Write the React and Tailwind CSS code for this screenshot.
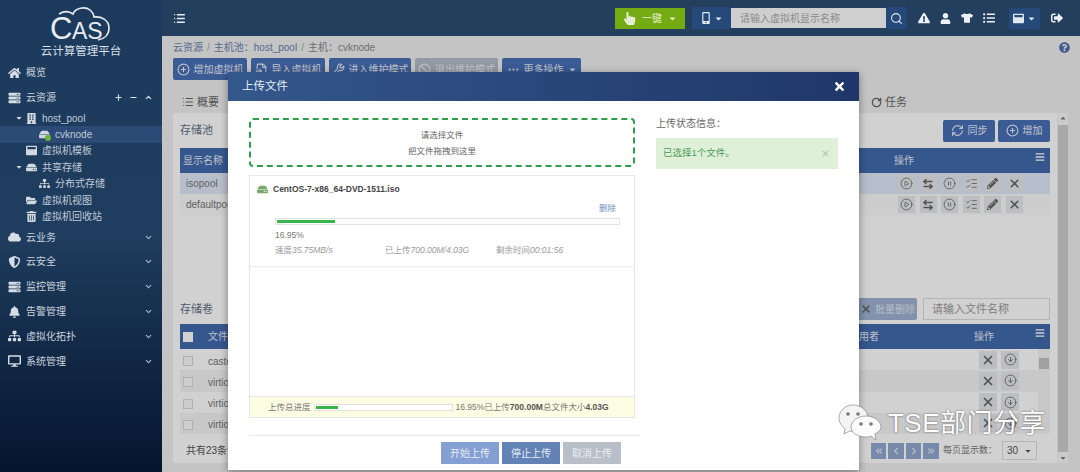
import {
  CirclePlus, RefreshCw, CirclePlay, CirclePause, CircleArrowDown, Search, ChevronDown, ChevronUp,
  ChevronLeft, ChevronRight, ChevronsLeft, ChevronsRight, Plus, Minus, List, X, Ellipsis, RotateCw, Ban, Wrench,
  FileInput, ArrowLeftRight, ListChecks,
} from 'lucide-react'
import {
  FaHome, FaCloud, FaShieldAlt, FaBell, FaSitemap, FaDesktop, FaServer, FaTrashAlt, FaFolderOpen,
  FaTshirt, FaUser, FaExclamationTriangle, FaListUl, FaSignOutAlt, FaTimes, FaHandPointer, FaPencilAlt,
  FaBars, FaCaretDown, FaCaretUp, FaQuestionCircle, FaHdd, FaBuilding, FaWindowMaximize, FaMobileAlt,
} from 'react-icons/fa'

const font = { fontFamily: '"Liberation Sans", "Noto Sans CJK SC", sans-serif' }

// ─── Sidebar ──────────────────────────────────────────
function TopItem({ icon: Icon, label, h = 'h-[24.8px]', extra }) {
  return (
    <div className={`flex items-center pl-[8px] pr-[9px] text-[10px] text-[#c9d3de] ${h}`}>
      <Icon size={12} className="w-[13px] shrink-0 text-[#d5dde6]" />
      <span className="ml-[5px] flex-1">{label}</span>
      {extra ?? <ChevronDown size={9} strokeWidth={3} className="text-[#aab8c6]" />}
    </div>
  )
}

function TreeItem({ icon: Icon, label, indent, caret, active, status }) {
  return (
    <div
      className={`flex h-[16.4px] items-center text-[10px] text-[#c0cbd7] ${active ? 'bg-[#2b4a75]' : ''} ${indent}`}
    >
      <span className="w-[10px] shrink-0">{caret && <FaCaretDown size={8} className="text-[#d0d8e0]" />}</span>
      <span className="relative ml-[1px] w-[12px] shrink-0">
        <Icon size={11} className="text-[#d0d8e0]" />
        {status && <span className="absolute bottom-[-1px] right-0 h-[6px] w-[6px] rounded-full bg-[#6fb52c]" />}
      </span>
      <span className="ml-[4px]">{label}</span>
    </div>
  )
}

function Sidebar() {
  return (
    <aside className="flex w-[162px] shrink-0 flex-col bg-gradient-to-b from-[#1c3a5c] via-[#1f3d5e] to-[#06152f]">
      <div className="flex h-[60px] flex-col items-center pt-[6px]">
        <svg width="64" height="40" viewBox="0 0 64 40" fill="none" className="mb-[-2px]">
          <path
            d="M10 8C15 5 20 5 24 8C26 2 36 0 41 4C44 7 45 9 45 11C52 10 60 14 60 22C60 29 55 33 49 34"
            stroke="#e6ecf2"
            strokeWidth="1.6"
          />
          <text x="1" y="33" fontSize="31" fill="#e6ecf2" style={font}>C</text>
          <text x="23" y="33" fontSize="23" fontWeight="500" fill="#e6ecf2" style={font}>AS</text>
        </svg>
        <div className="text-[11.5px] leading-[15px] text-[#d6dee6]">云计算管理平台</div>
      </div>
      <TopItem icon={FaHome} label="概览" h="h-[25px]" extra={<span />} />
      <TopItem
        icon={FaServer}
        label="云资源"
        h="h-[25px]"
        extra={
          <span className="flex items-center gap-[6px] text-[#d5dde6]">
            <Plus size={9} strokeWidth={3} />
            <Minus size={9} strokeWidth={3} />
            <ChevronUp size={9} strokeWidth={3} />
          </span>
        }
      />
      <div className="flex flex-col">
        <TreeItem icon={FaBuilding} label="host_pool" indent="pl-[15px]" caret />
        <TreeItem icon={FaHdd} label="cvknode" indent="pl-[28px]" active status />
        <TreeItem icon={FaWindowMaximize} label="虚拟机模板" indent="pl-[15px]" />
        <TreeItem icon={FaHdd} label="共享存储" indent="pl-[15px]" caret />
        <TreeItem icon={FaSitemap} label="分布式存储" indent="pl-[28px]" />
        <TreeItem icon={FaFolderOpen} label="虚拟机视图" indent="pl-[15px]" />
        <TreeItem icon={FaTrashAlt} label="虚拟机回收站" indent="pl-[15px]" />
      </div>
      <div className="flex flex-col">
        <TopItem icon={FaCloud} label="云业务" />
        <TopItem icon={FaShieldAlt} label="云安全" />
        <TopItem icon={FaServer} label="监控管理" />
        <TopItem icon={FaBell} label="告警管理" />
        <TopItem icon={FaSitemap} label="虚拟化拓扑" />
        <TopItem icon={FaDesktop} label="系统管理" />
      </div>
    </aside>
  )
}

// ─── Top bar ──────────────────────────────────────────
function TopBar() {
  return (
    <header className="flex h-[36px] shrink-0 items-center bg-[#233f5d] pl-[11px]">
      <List size={13} strokeWidth={2.5} className="text-[#e6ecf2]" />
      <div className="ml-[429px] flex h-[21px] w-[70px] items-center justify-center gap-[6px] bg-[#74ab12] text-[10px] text-[#e3efcc]">
        <FaHandPointer size={13} className="text-[#e8f0d8]" />
        <span>一键</span>
        <FaCaretDown size={9} />
      </div>
      <div className="ml-[7px] flex h-[22px] w-[39px] items-center justify-center gap-[2px] bg-[#254a7a] text-[#e6ecf2]">
        <FaMobileAlt size={12} />
        <FaCaretDown size={9} />
      </div>
      <div className="flex h-[20px] w-[155px] items-center bg-[#cfcfcf] pl-[9px] text-[10px] text-[#8a8a8a]">
        请输入虚拟机显示名称
      </div>
      <div className="flex h-[22px] w-[21px] items-center justify-center bg-[#254a7a]">
        <Search size={13} strokeWidth={2} className="text-[#e6ecf2]" />
      </div>
      <div className="ml-[11px] flex items-center gap-[10px] text-[#eef2f6]">
        <FaExclamationTriangle size={12} />
        <FaUser size={11} />
        <FaTshirt size={12} />
        <FaListUl size={12} />
      </div>
      <div className="ml-[14px] flex h-[21px] w-[31px] items-center justify-center gap-[3px] rounded-[2px] bg-[#254a7a] text-[#dfe6ee]">
        <FaWindowMaximize size={11} />
        <FaCaretDown size={9} />
      </div>
      <FaSignOutAlt size={12} className="ml-[11px] text-[#eef2f6]" />
    </header>
  )
}

// ─── Page under the dialog ──────────────────────────────────────────
function ToolButton({ icon: Icon, label, muted, caret, w }) {
  return (
    <div
      className={`flex h-[22px] items-center justify-center gap-[4px] rounded-[2px] text-[10px] text-[#e8edf6] ${w} ${muted ? 'bg-[#b3bbc9] text-[#e0e3e8]' : 'bg-[#486fb6]'}`}
    >
      <Icon size={13} />
      <span>{label}</span>
      {caret && <FaCaretDown size={9} />}
    </div>
  )
}

function HeadRow({ children }) {
  return (
    <div className="relative flex h-[25px] items-center bg-[#426bae] text-[10px] text-[#e6ebf5]">
      {children}
      <FaBars size={10} className="absolute right-[5px] top-[4px] text-white" />
    </div>
  )
}

function OpButton({ icon: Icon, size = 13, bold, box = 'h-[17px] w-[17px]' }) {
  return (
    <span className={`flex items-center justify-center bg-[#e6e8ec] text-[#666] ${box}`}>
      <Icon size={size} strokeWidth={bold ? 3 : 1.5} />
    </span>
  )
}

function PoolRow({ name, selected }) {
  return (
    <div className={`flex h-[21px] items-center pl-[6px] text-[10px] text-[#777] ${selected ? 'bg-[#e0e8f8]' : 'bg-[#fafafa]'}`}>
      <span className="flex-1">{name}</span>
      <div className="flex gap-[4.6px] pr-[27px]">
        <OpButton icon={CirclePlay} />
        <OpButton icon={ArrowLeftRight} size={12} bold />
        <OpButton icon={CirclePause} />
        <OpButton icon={ListChecks} />
        <OpButton icon={FaPencilAlt} size={11} />
        <OpButton icon={X} size={13} bold />
      </div>
    </div>
  )
}

function FileRow({ name, striped }) {
  return (
    <div className={`flex h-[21.25px] items-center pl-[3px] pt-[3px] text-[10px] text-[#777] ${striped ? 'bg-[#f4f4f4]' : ''}`}>
      <span className="h-[10px] w-[10px] border border-[#d8d8d8] bg-[#fafafa]" />
      <span className="ml-[15px] flex-1">{name}</span>
      <div className="mt-[-3px] flex gap-[4px] pr-[31px]">
        <OpButton icon={X} size={14} bold box="h-[18px] w-[18px]" />
        <OpButton icon={CircleArrowDown} size={13} box="h-[18px] w-[18px]" />
      </div>
    </div>
  )
}

function PagerButton({ icon: Icon }) {
  return (
    <span className="flex h-[16px] w-[15.5px] items-center justify-center bg-[#92a9d0] text-[#dfe6f2]">
      <Icon size={10} strokeWidth={3} />
    </span>
  )
}

function PageContent() {
  return (
    <div className="flex h-full flex-col text-[#555]">
      <div className="flex h-[22px] items-center justify-between pl-[11px] pr-[10px] pt-[1px] text-[10px]">
        <div className="flex items-center text-[#6a82ad]">
          <span>云资源</span>
          <span className="mx-[4px] text-[#aaa]">/</span>
          <span>主机池：host_pool</span>
          <span className="mx-[4px] text-[#aaa]">/</span>
          <span className="text-[#888]">主机：cvknode</span>
        </div>
        <FaQuestionCircle size={11} className="text-[#4d6fb0]" />
      </div>
      <div className="flex gap-[4px] pl-[11px]">
        <ToolButton icon={CirclePlus} label="增加虚拟机" w="w-[74px]" />
        <ToolButton icon={FileInput} label="导入虚拟机" w="w-[74px]" />
        <ToolButton icon={Wrench} label="进入维护模式" w="w-[82px]" />
        <ToolButton icon={Ban} label="退出维护模式" muted w="w-[83px]" />
        <ToolButton icon={Ellipsis} label="更多操作" caret w="w-[79px]" />
      </div>
      <div className="mt-[11px] flex h-[22px] items-center justify-between pl-[20px] text-[11px] text-[#666]">
        <span className="flex items-center gap-[3px]"><List size={12} />概要</span>
        <span className="mr-[173px] flex items-center gap-[3px]"><RotateCw size={11} strokeWidth={3} />任务</span>
      </div>
      <div className="flex min-h-0 flex-1 pl-[11px]">
        <div className="flex h-[350px] w-[884px] flex-col bg-white px-[7px]">
          <div className="flex h-[35px] items-center justify-between">
            <span className="text-[11px] text-[#5f6f88]">存储池</span>
            <div className="flex gap-[3px]">
              <ToolButton icon={RefreshCw} label="同步" w="w-[52px]" />
              <ToolButton icon={CirclePlus} label="增加" w="w-[52px]" />
            </div>
          </div>
          <HeadRow>
            <span className="flex-1 pl-[3px]">显示名称</span>
            <span className="pr-[136px]">操作</span>
          </HeadRow>
          <PoolRow name="isopool" selected />
          <PoolRow name="defaultpool" />
          <div className="mt-[79px] flex h-[30px] items-center justify-between">
            <span className="text-[11px] text-[#5f6f88]">存储卷</span>
            <div className="flex items-center gap-[6px]">
              <div className="flex h-[22px] w-[59px] items-center justify-center gap-[3px] rounded-[2px] bg-[#9fb2d2] text-[10px] text-[#dfe6f2]">
                <X size={12} strokeWidth={3} className="text-[#666]" />
                批量删除
              </div>
              <div className="flex h-[22px] w-[127px] items-center border border-[#ddd] bg-white pl-[8px] text-[11px] text-[#999]">
                请输入文件名称
              </div>
            </div>
          </div>
          <HeadRow>
            <span className="ml-[3px] h-[10px] w-[10px] bg-white" />
            <span className="ml-[15px] flex-1">文件名</span>
            <span className="mr-[95px]">用者</span>
            <span className="pr-[56px]">操作</span>
          </HeadRow>
          <div className="relative">
            <FileRow name="castools.iso" />
            <FileRow name="virtio-win.iso" striped />
            <FileRow name="virtio-win.vfd" />
            <FileRow name="virtio-win2.iso" striped />
            <div className="absolute right-0 top-0 flex h-full w-[12px] flex-col items-center bg-[#f4f4f4] pt-[9px]">
              <span className="h-[11px] w-[10px] bg-[#c4c4c4]" />
            </div>
          </div>
          <div className="mt-[7px] flex h-[19px] items-center justify-between pl-[6px] pr-[13px] text-[10px]">
            <span>共有23条记录</span>
            <div className="flex items-center gap-[2px]">
              <PagerButton icon={ChevronsLeft} />
              <PagerButton icon={ChevronLeft} />
              <PagerButton icon={ChevronRight} />
              <PagerButton icon={ChevronsRight} />
              <span className="ml-[2px] mr-[3px] text-[9px] text-[#777]">每页显示数：</span>
              <span className="flex h-[19px] w-[35px] items-center justify-between border border-[#ddd] px-[4px]">
                30<FaCaretDown size={8} />
              </span>
            </div>
          </div>
        </div>
        <div className="ml-[1px] flex h-[350px] w-[10px] flex-col items-center justify-between bg-[#f8f8f8] text-[#777]">
          <FaCaretUp size={8} className="mt-[1px]" />
          <div className="h-[327px] w-full bg-[#cfcfcf]" />
          <FaCaretDown size={8} className="mb-[1px]" />
        </div>
      </div>
    </div>
  )
}

// ─── Upload dialog ──────────────────────────────────────────
function Bar({ percent, className }) {
  return (
    <div className={`border border-[#e2e2e2] bg-white p-[1px] ${className}`}>
      <div className="h-full bg-[#39b54a]" style={{ width: `${percent}%` }} />
    </div>
  )
}

function Dialog() {
  return (
    <div className="absolute left-[66px] top-[36px] flex h-[398px] w-[631px] flex-col bg-white shadow-[0_2px_8px_rgba(0,0,0,0.4)]">
      <div className="flex h-[29px] shrink-0 items-center justify-between bg-gradient-to-r from-[#34578c] to-[#1f3768] pl-[14px] pr-[13px] text-[11.5px] text-[#e8edf4]">
        <span>上传文件</span>
        <FaTimes size={13} className="text-white" />
      </div>
      <div className="flex min-h-0 flex-1 pl-[21px] pr-[21px] pt-[17px]">
        <div className="flex w-[386px] flex-col">
          <div className="flex h-[49px] flex-col items-center justify-center gap-[4px] rounded-[4px] border-2 border-dashed border-[#2e9e4a] text-[8.5px] leading-[12px] text-[#666]">
            <span>请选择文件</span>
            <span>把文件拖拽到这里</span>
          </div>
          <div className="mt-[8px] flex h-[243px] flex-col border border-[#e4e6ea]">
            <div className="flex h-[91px] flex-col border-b border-dotted border-[#ddd] px-[7px]">
              <div className="mt-[7px] flex items-center text-[8.5px] font-bold text-[#444]">
                <FaHdd size={11} className="text-[#7aa76a]" />
                <span className="ml-[5px]">CentOS-7-x86_64-DVD-1511.iso</span>
              </div>
              <div className="mt-[6px] pr-[11px] text-right text-[8.5px] text-[#6f8fc0]">删除</div>
              <Bar percent={16.95} className="ml-[18px] mr-[7px] mt-[3px] h-[7px]" />
              <div className="ml-[18px] mt-[4px] text-[8.5px] text-[#777]">16.95%</div>
              <div className="ml-[18px] mt-[3px] flex text-[8.5px] text-[#999]">
                <span className="w-[110px]">速度<i>35.75MB/s</i></span>
                <span className="w-[111px]">已上传<i>700.00M/4.03G</i></span>
                <span>剩余时间<i>00:01:56</i></span>
              </div>
            </div>
            <div className="flex-1" />
            <div className="flex h-[21px] items-center border-t border-[#e4e6ea] bg-[#fdfde3] pl-[18px] text-[8.5px] text-[#777]">
              <span>上传总进度</span>
              <Bar percent={16.95} className="ml-[3px] h-[7px] w-[139px]" />
              <span className="ml-[3px]">
                16.95%已上传<b className="text-[#555]">700.00M</b>总文件大小<b className="text-[#555]">4.03G</b>
              </span>
            </div>
          </div>
          <div className="mt-[17px] flex h-[29px] w-[391px] items-end justify-end gap-[3px] border-t border-[#e6e8ec] pr-[19px] text-[10px] text-[#e8edf6]">
            <span className="flex h-[22px] w-[58px] items-center justify-center bg-[#84a0d2]">开始上传</span>
            <span className="flex h-[22px] w-[58px] items-center justify-center bg-[#6383b6]">停止上传</span>
            <span className="flex h-[22px] w-[58px] items-center justify-center bg-[#b9bfc8]">取消上传</span>
          </div>
        </div>
        <div className="ml-[21px] flex w-[182px] flex-col">
          <div className="text-[10px] leading-[12px] text-[#666]">上传状态信息：</div>
          <div className="mt-[8px] flex h-[31px] items-center justify-between bg-[#dff0d8] pl-[7px] pr-[8px] text-[9.5px] text-[#4c9a5a]">
            <span>已选择1个文件。</span>
            <X size={9} strokeWidth={3} className="text-[#b6c9ae]" />
          </div>
        </div>
      </div>
    </div>
  )
}

function WeChatMark() {
  return (
    <svg width="44" height="37" viewBox="0 0 44 37">
      <path d="M15 1C7 1 1 7 1 14C1 19 4 22 7 25L6 30L12 27C16 28 20 27 24 25L30 12C28 5 22 1 15 1Z" fill="#f4f4f4" stroke="#777" strokeWidth="0.6" />
      <circle cx="10" cy="10" r="1.8" fill="#777" />
      <circle cx="20" cy="10" r="1.8" fill="#777" />
      <path d="M28 12C20 12 13 17 13 23C13 29 20 33 28 33C30 33 32 33 33 32L38 36L37 30C40 28 43 26 43 23C43 17 36 12 28 12Z" fill="#fbfbfb" stroke="#777" strokeWidth="0.6" />
      <circle cx="23" cy="20" r="1.8" fill="#777" />
      <circle cx="33" cy="20" r="1.8" fill="#777" />
    </svg>
  )
}

function Watermark() {
  return (
    <div className="absolute bottom-[31px] right-[34px] flex items-center gap-[6px] text-white">
      <WeChatMark />
      <span className="text-[26px] leading-[30px] tracking-[0.5px] [text-shadow:0_0_2px_rgba(0,0,0,0.6)]">TSE部门分享</span>
    </div>
  )
}

export default function App() {
  return (
    <div className="relative flex h-[472px] w-[1080px] overflow-hidden" style={font}>
      <Sidebar />
      <div className="flex min-w-0 flex-1 flex-col">
        <TopBar />
        <main className="relative flex-1 bg-[#efefef]">
          <PageContent />
          <div className="absolute inset-0 bg-black/[0.18]" />
          <Dialog />
        </main>
      </div>
      <Watermark />
    </div>
  )
}
